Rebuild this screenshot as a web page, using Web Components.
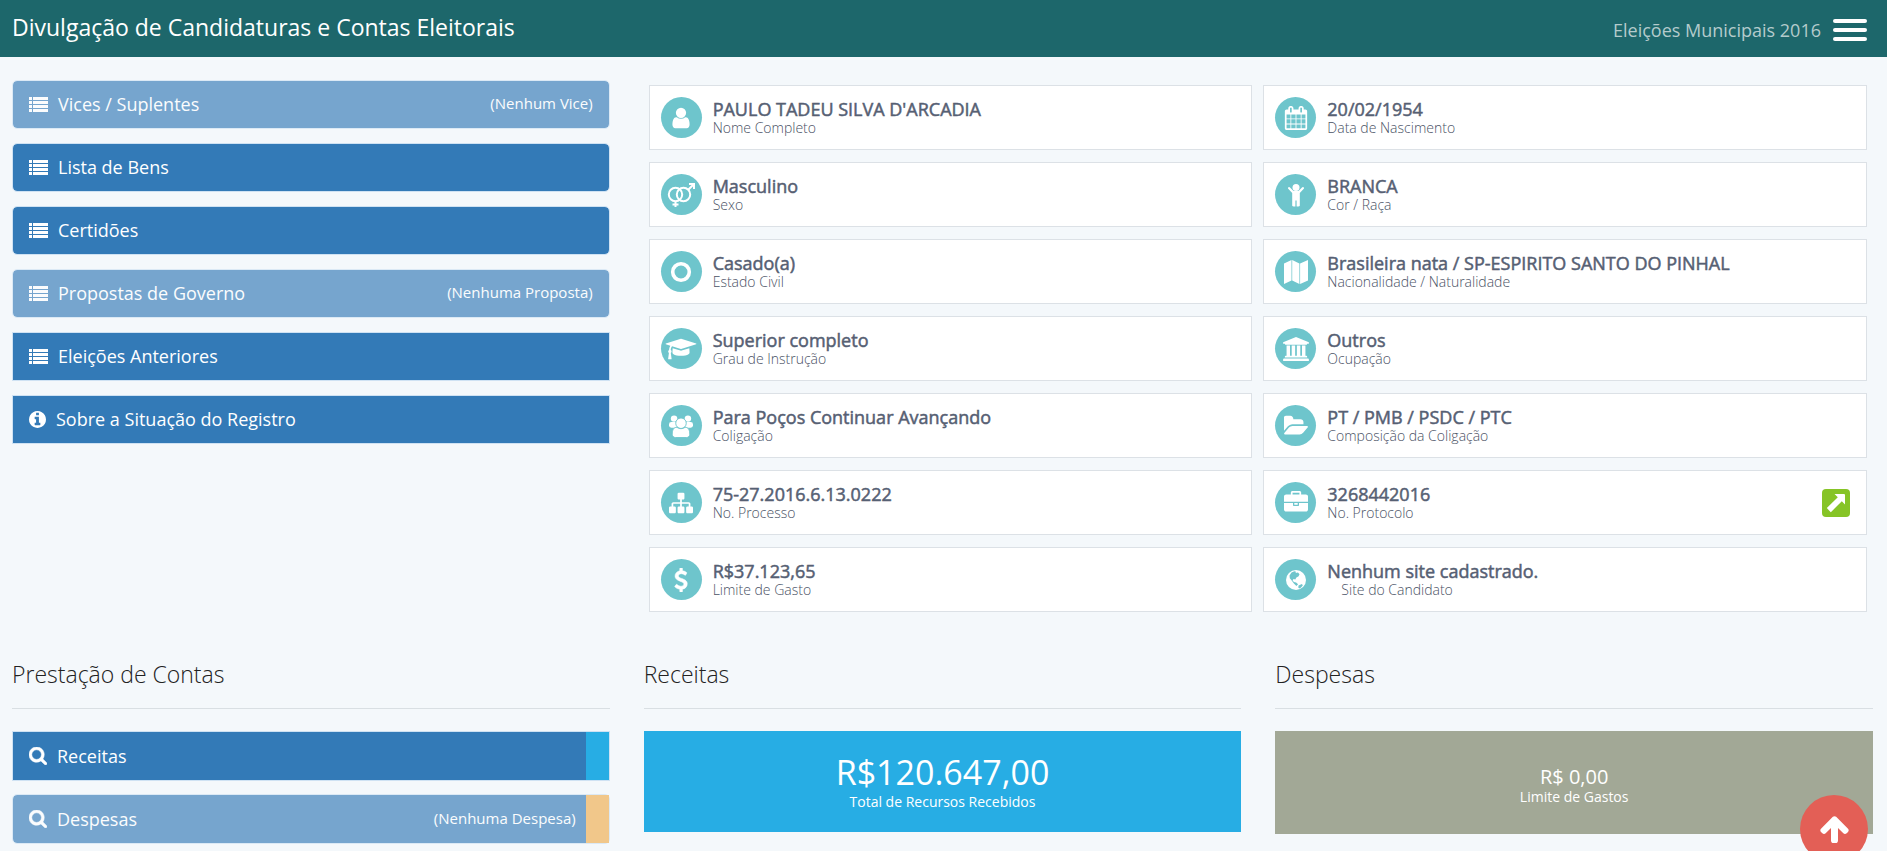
<!DOCTYPE html>
<html lang="pt-BR">
<head>
<meta charset="utf-8">
<title>Divulgação de Candidaturas e Contas Eleitorais</title>
<style>
  body {
    margin: 0;
    background: #f4f8fb;
    color: #333;
    font-family: "Open Sans", "Noto Sans", sans-serif;
  }

  main {
    display: grid;
    grid-template-columns: repeat(3, minmax(0, 1fr));
    column-gap: 34px;
    padding: 23px 14px 0 12px;
  }

  .menu {
    display: grid;
    align-content: start;
    gap: 14px;
  }

  .details {
    grid-column: span 2;
    display: grid;
    grid-template-columns: repeat(2, minmax(0, 1fr));
    gap: 12px 11px;
    padding: 5px 6px 0 5px;
  }

  .accounts {
    display: grid;
    gap: 13px;
  }
</style>
</head>
<body>

<page-header>
  Divulgação de Candidaturas e Contas Eleitorais
  <span slot="election">Eleições Municipais 2016</span>
</page-header>

<main>
  <nav class="menu">
    <menu-button icon="list" muted rounded>Vices / Suplentes<span slot="note">(Nenhum Vice)</span></menu-button>
    <menu-button icon="list" rounded>Lista de Bens</menu-button>
    <menu-button icon="list" rounded>Certidões</menu-button>
    <menu-button icon="list" muted rounded>Propostas de Governo<span slot="note">(Nenhuma Proposta)</span></menu-button>
    <menu-button icon="list">Eleições Anteriores</menu-button>
    <menu-button icon="info">Sobre a Situação do Registro</menu-button>
  </nav>

  <section class="details">
    <info-card icon="user" label="Nome Completo">PAULO TADEU SILVA D'ARCADIA</info-card>
    <info-card icon="calendar" label="Data de Nascimento">20/02/1954</info-card>
    <info-card icon="gender" label="Sexo">Masculino</info-card>
    <info-card icon="child" label="Cor / Raça">BRANCA</info-card>
    <info-card icon="ring" label="Estado Civil">Casado(a)</info-card>
    <info-card icon="map" label="Nacionalidade / Naturalidade">Brasileira nata / SP-ESPIRITO SANTO DO PINHAL</info-card>
    <info-card icon="graduation" label="Grau de Instrução">Superior completo</info-card>
    <info-card icon="bank" label="Ocupação">Outros</info-card>
    <info-card icon="group" label="Coligação">Para Poços Continuar Avançando</info-card>
    <info-card icon="folder" label="Composição da Coligação">PT / PMB / PSDC / PTC</info-card>
    <info-card icon="sitemap" label="No. Processo">75-27.2016.6.13.0222</info-card>
    <info-card icon="briefcase" label="No. Protocolo" link="#protocolo">3268442016</info-card>
    <info-card icon="dollar" label="Limite de Gasto">R$37.123,65</info-card>
    <info-card icon="globe" label="Site do Candidato" indent>Nenhum site cadastrado.</info-card>
  </section>

  <titled-section heading="Prestação de Contas">
    <div class="accounts">
      <menu-button icon="search" strip style="--strip: #27ade4">Receitas</menu-button>
      <menu-button icon="search" strip muted rounded style="--strip: #f0ad4e">Despesas<span slot="note">(Nenhuma Despesa)</span></menu-button>
    </div>
  </titled-section>

  <titled-section heading="Receitas">
    <total-box label="Total de Recursos Recebidos" large>R$120.647,00</total-box>
  </titled-section>

  <titled-section heading="Despesas">
    <total-box label="Limite de Gastos">R$ 0,00</total-box>
  </titled-section>
</main>

<scroll-top></scroll-top>

<script>
// Icon shapes: [viewBox, markup]
const ICONS = {
  list: ["0 0 19 15", `<path d="M0 0h3v3H0zM4 0h15v3H4zM0 4h3v3H0zM4 4h15v3H4zM0 8h3v3H0zM4 8h15v3H4zM0 12h3v3H0zM4 12h15v3H4z"/>`],
  info: ["128 128 1536 1536", `<path d="M1152 1376v-160q0-14-9-23t-23-9h-96v-512q0-14-9-23t-23-9h-320q-14 0-23 9t-9 23v160q0 14 9 23t23 9h96v320h-96q-14 0-23 9t-9 23v160q0 14 9 23t23 9h448q14 0 23-9t9-23zm-128-896v-160q0-14-9-23t-23-9h-192q-14 0-23 9t-9 23v160q0 14 9 23t23 9h192q14 0 23-9t9-23zm640 416q0 209-103 385.5t-279.5 279.5-385.5 103-385.5-103-279.5-279.5-103-385.5 103-385.5 279.5-279.5 385.5-103 385.5 103 279.5 279.5 103 385.5z"/>`],
  search: ["64 128 1664 1664", `<path stroke="currentColor" stroke-width="50" d="M1216 832q0-185-131.5-316.5t-316.5-131.5-316.5 131.5-131.5 316.5 131.5 316.5 316.5 131.5 316.5-131.5 131.5-316.5zm512 832q0 52-38 90t-90 38q-54 0-90-38l-343-342q-179 124-399 124-143 0-273.5-55.5t-225-150-150-225-55.5-273.5 55.5-273.5 150-225 225-150 273.5-55.5 273.5 55.5 225 150 150 225 55.5 273.5q0 220-124 399l343 343q37 37 37 90z"/>`],
  user: ["0 0 1792 1792", `<path d="M1536 1399q0 109-62.5 187t-150.5 78h-854q-88 0-150.5-78t-62.5-187q0-85 8.5-160.5t31.5-152 58.5-131 94-89 134.5-34.5q131 128 313 128t313-128q76 0 134.5 34.5t94 89 58.5 131 31.5 152 8.5 160.5zm-256-887q0 159-112.5 271.5t-271.5 112.5-271.5-112.5-112.5-271.5 112.5-271.5 271.5-112.5 271.5 112.5 112.5 271.5z"/>`],
  calendar: ["0 0 1792 1792", `<path d="M192 1664h288v-288h-288v288zm352 0h320v-288h-320v288zm-352-352h288v-320h-288v320zm352 0h320v-320h-320v320zm-352-384h288v-288h-288v288zm736 736h320v-288h-320v288zm-384-736h320v-288h-320v288zm768 736h288v-288h-288v288zm-384-352h320v-320h-320v320zm-352-864v-288q0-13-9.5-22.5t-22.5-9.5h-64q-13 0-22.5 9.5t-9.5 22.5v288q0 13 9.5 22.5t22.5 9.5h64q13 0 22.5-9.5t9.5-22.5zm736 864h288v-320h-288v320zm-384-384h320v-288h-320v288zm384 0h288v-288h-288v288zm32-480v-288q0-13-9.5-22.5t-22.5-9.5h-64q-13 0-22.5 9.5t-9.5 22.5v288q0 13 9.5 22.5t22.5 9.5h64q13 0 22.5-9.5t9.5-22.5zm384-64v1280q0 52-38 90t-90 38h-1408q-52 0-90-38t-38-90v-1280q0-52 38-90t90-38h128v-96q0-66 47-113t113-47h64q66 0 113 47t47 113v96h384v-96q0-66 47-113t113-47h64q66 0 113 47t47 113v96h128q52 0 90 38t38 90z"/>`],
  gender: ["0 0 28 24", `<g fill="none" stroke="currentColor" stroke-width="2"><circle cx="8.5" cy="11.5" r="6.7"/><circle cx="16.5" cy="11.5" r="6.7"/><path d="M8.5 18v6M5.500 21.500h6M21.500 6.500l5.500-5.500M22 1h5v5"/></g>`],
  child: ["0 0 24 24", `<circle cx="12" cy="4.500" r="3.500"/><path d="M4.500 4.200Q3.700 4.700 4 5.600L8.200 10v12.700q.3.800 1.500.8h1.700v-6h1.200v6h1.700q1.200 0 1.500-.8V10L20 5.600q.3-.9-.5-1.400-.8-.4-1.500.2L14.500 8h-5L6 4.400q-.7-.6-1.500-.2z"/>`],
  ring: ["0 0 24 24", `<circle cx="12" cy="12" r="8.300" fill="none" stroke="currentColor" stroke-width="3.600"/>`],
  map: ["0 0 24 24", `<path d="M0 3.500L7.500 0v20.500L0 24zM8.200 0l7.200 3.500V24l-7.200-3.500zM16.100 3.500L24 0v20.500L16.100 24z"/>`],
  graduation: ["0 0 2304 1792", `<path d="M1774 836l18 316q4 69-82 128t-235 93.500-323 34.500-323-34.500-235-93.500-82-128l18-316 574 181q22 7 48 7t48-7zm530-324q0 23-22 31l-1120 352q-4 1-10 1t-10-1l-652-206q-43 34-71 111.500t-34 178.500q63 36 63 109 0 69-58 107l58 433q2 14-8 25-9 11-24 11h-192q-15 0-24-11-10-11-8-25l58-433q-58-38-58-107 0-73 65-111 11-207 98-330l-333-104q-22-8-22-31t22-31l1120-352q4-1 10-1t10 1l1120 352q22 8 22 31z"/>`],
  bank: ["0 0 1920 1792", `<path d="M960 0l960 384v128h-128q0 26-20.500 45t-48.500 19h-1526q-28 0-48.500-19t-20.500-45h-128v-128zm-704 640h256v768h128v-768h256v768h128v-768h256v768h128v-768h256v768h59q28 0 48.500 19t20.500 45v64h-1664v-64q0-26 20.500-45t48.500-19h59v-768zm1595 960q28 0 48.500 19t20.500 45v128h-1920v-128q0-26 20.500-45t48.500-19h1782z"/>`],
  group: ["0 0 26 24", `<circle cx="5.500" cy="4" r="3.500"/><circle cx="20.500" cy="4" r="3.500"/><rect y="7.800" width="9" height="6" rx="2.500"/><rect x="17" y="7.800" width="9" height="6" rx="2.500"/><g stroke="#6ec5cc"><circle cx="13" cy="9" r="5.700"/><path d="M3.500 21c0-4 1.200-7.600 5-7.600 2.600 2 6.400 2 9 0 3.800 0 5 3.600 5 7.600 0 2-1.500 3.500-3.500 3.500H7c-2 0-3.500-1.500-3.500-3.500z"/></g>`],
  folder: ["0 0 1816 1792", `<path d="M1815 952q0 31-31 66l-336 396q-43 51-120.500 86.500t-143.500 35.500h-1088q-34 0-60.500-13t-26.500-43q0-31 31-66l336-396q43-51 120.500-86.500t143.500-35.500h1088q34 0 60.500 13t26.500 43zm-343-344v160h-832q-94 0-197 47.500t-164 119.500l-337 396-5 6q0-4-.5-12.500t-.5-12.500v-960q0-92 66-158t158-66h320q92 0 158 66t66 158v32h544q92 0 158 66t66 158z"/>`],
  sitemap: ["0 0 1792 1792", `<path d="M1792 1248v320q0 40-28 68t-68 28h-320q-40 0-68-28t-28-68v-320q0-40 28-68t68-28h96v-192h-512v192h96q40 0 68 28t28 68v320q0 40-28 68t-68 28h-320q-40 0-68-28t-28-68v-320q0-40 28-68t68-28h96v-192h-512v192h96q40 0 68 28t28 68v320q0 40-28 68t-68 28h-320q-40 0-68-28t-28-68v-320q0-40 28-68t68-28h96v-192q0-52 38-90t90-38h512v-192h-96q-40 0-68-28t-28-68v-320q0-40 28-68t68-28h320q40 0 68 28t28 68v320q0 40-28 68t-68 28h-96v192h512q52 0 90 38t38 90v192h96q40 0 68 28t28 68z"/>`],
  briefcase: ["0 0 1792 1792", `<path d="M640 256h512v-128h-512v128zm1152 640v480q0 66-47 113t-113 47h-1472q-66 0-113-47t-47-113v-480h672v160q0 26 19 45t45 19h320q26 0 45-19t19-45v-160h672zm-768 0v128h-256v-128h256zm768-480v384h-1792v-384q0-66 47-113t113-47h352v-160q0-40 28-68t68-28h576q40 0 68 28t28 68v160h352q66 0 113 47t47 113z"/>`],
  dollar: ["0 0 1792 1792", `<path stroke="currentColor" stroke-width="40" d="M1362 1185q0 153-99.500 263.500t-258.500 136.500v175q0 14-9 23t-23 9h-135q-13 0-22.500-9.500t-9.500-22.500v-175q-66-9-127.500-31t-101.500-44.500-74-48-46.500-37.500-17.500-18q-17-21-2-41l103-135q7-10 23-12 15-2 24 9l2 2q113 99 243 125 37 8 74 8 81 0 142.500-43t61.500-122q0-28-15-53t-33.500-42-58.500-37.500-66-32-80-32.500q-39-16-61.500-25t-61.500-26.500-62.500-31-56.500-35.500-53.500-42.500-43.500-49-35.500-58-21-66.500-8.500-78q0-138 98-242t255-134v-180q0-13 9.500-22.500t22.500-9.500h135q14 0 23 9t9 23v176q57 6 110.500 23t87 33.500 63.500 37.500 39 29 15 14q17 18 5 38l-81 146q-8 15-23 16-14 3-27-7-3-3-14.500-12t-39-26.500-58.500-32-74.500-26-85.500-11.500q-95 0-155 43t-60 111q0 26 8.500 48t29.500 41.500 39.500 33 56 31 60.500 27 70 27.500q53 20 81 31.500t76 35 75.500 42.500 62 50 53 63.500 31.500 76.500 13 94z"/>`],
  globe: ["0 0 24 24", `<circle cx="12" cy="12" r="10"/><path fill="#6ec5cc" d="M7.500 4.500l2.800-1.300 1.700.6-.4 1.300 2.400-.5 1.500 1.700-.9 2-2.200 1.200-1.100 2-1.700-.4-1.100 1.100 1.400 1.800 2.200.6 2 1.700-1.700 1.600-2.500-2.400-2.600-3.600-1.500-1.700-.3-2.600zM14.500 17.500l3.500-1.500.8 1.500-2.800 3-1.700-.8z"/>`],
  up: ["100 128 1592 1592", `<path d="M1675 971q0 51-37 90l-75 75q-38 38-91 38-54 0-90-38l-294-293v704q0 52-37.500 84.500t-90.500 32.500h-128q-53 0-90.500-32.500t-37.500-84.500v-704l-294 293q-36 38-90 38t-90-38l-75-75q-38-38-38-90 0-53 38-91l651-651q35-37 90-37 54 0 91 37l651 651q37 39 37 91z"/>`],
  external: ["0 0 28 28", `<rect width="28" height="28" rx="4" fill="#86c426"/><path fill="#fff" d="M12.500 5H22q1 0 1 1v9.500l-3.200-3.200L8.800 23.200 4.800 19 15.800 8.300z"/>`]
};

const icon = name => `<svg viewBox="${ICONS[name][0]}" fill="currentColor" aria-hidden="true">${ICONS[name][1]}</svg>`;

// Base class: renders the template of the subclass once
class BaseElement extends HTMLElement {
  constructor() {
    super();
    this.attachShadow({ mode: "open" });
  }

  connectedCallback() {
    const t = document.createElement("template");
    t.innerHTML = this.template;
    this.shadowRoot.replaceChildren(t.content.cloneNode(true));
  }
}

class PageHeader extends BaseElement {
  get template() {
    return `
    <style>
      :host { display: block; }
      header {
        display: flex;
        align-items: center;
        justify-content: space-between;
        height: 57px;
        padding: 0 20px 0 12px;
        background: #1d676b;
        color: #fff;
      }
      h1 {
        margin: 0;
        padding-bottom: 4px;
        font-size: 23px;
        line-height: 32px;
        font-weight: 400;
      }
      .right {
        display: flex;
        align-items: center;
        gap: 12px;
        padding-top: 2px;
        font-size: 18px;
        line-height: 24px;
        color: #b4cbcc;
      }
      button {
        display: grid;
        gap: 5px;
        width: 34px;
        padding: 0;
        border: 0;
        background: none;
      }
      i {
        height: 4px;
        border-radius: 2px;
        background: #fff;
      }
    </style>
    <header>
      <h1><slot></slot></h1>
      <div class="right">
        <slot name="election"></slot>
        <button type="button" aria-label="Menu"><i></i><i></i><i></i></button>
      </div>
    </header>`;
  }
}

class MenuButton extends BaseElement {
  get template() {
    return `
    <style>
      :host { display: block; }
      button {
        display: flex;
        align-items: center;
        box-sizing: border-box;
        width: 100%;
        height: 49px;
        padding: 0 16px 1px;
        border: 1px solid #cfe2f3;
        background: #337ab7;
        background-clip: padding-box;
        color: #fff;
        font: inherit;
        font-size: 18px;
        line-height: 24px;
        text-align: left;
      }
      :host([rounded]) button { border-radius: 5px; }
      :host([muted]) button { opacity: .65; }
      :host([strip]) button {
        height: 50px;
        padding: 0 0 0 16px;
      }
      :host([strip]) button::after {
        content: "";
        align-self: stretch;
        width: 23px;
        margin-left: 10px;
        background: var(--strip);
      }
      svg { width: 19px; height: 15px; margin-right: 10px; }
      :host([icon="info"]) svg { width: 17px; height: 17px; }
      :host([icon="search"]) svg { width: 18px; height: 18px; }
      .label { flex: 1; }
      .note {
        padding-bottom: 3px;
        font-size: 15px;
        line-height: 20px;
      }
    </style>
    <button type="button">
      ${icon(this.getAttribute("icon"))}
      <span class="label"><slot></slot></span>
      <span class="note"><slot name="note"></slot></span>
    </button>`;
  }
}

class InfoCard extends BaseElement {
  get template() {
    const link = this.getAttribute("link");
    return `
    <style>
      :host {
        display: flex;
        align-items: center;
        gap: 11px;
        box-sizing: border-box;
        height: 65px;
        padding: 0 16px 0 11px;
        border: 1px solid #dce1e6;
        background: #fff;
        color: #566073;
      }
      .circle {
        display: grid;
        place-items: center;
        width: 41px;
        height: 41px;
        border-radius: 50%;
        background: #6ec5cc;
        color: #fff;
      }
      .circle svg { width: 24px; height: 24px; }
      :host([icon="graduation"]) .circle svg { width: 34px; }
      :host([icon="bank"]) .circle svg { width: 26px; }
      :host([icon="gender"]) .circle svg { width: 28px; }
      .text { flex: 1; }
      .value {
        font-size: 18px;
        line-height: 20px;
        -webkit-text-stroke: 0.5px currentColor;
      }
      .label {
        font-size: 14px;
        line-height: 18px;
        font-weight: 300;
        color: #4a5265;
      }
      :host([indent]) .label { padding-left: 14px; }
      a { display: block; height: 28px; }
      a svg { width: 28px; height: 28px; }
    </style>
    <span class="circle">${icon(this.getAttribute("icon"))}</span>
    <div class="text">
      <div class="value"><slot></slot></div>
      <div class="label">${this.getAttribute("label")}</div>
    </div>
    ${link ? `<a href="${link}" aria-label="Abrir protocolo">${icon("external")}</a>` : ""}`;
  }
}

class TitledSection extends BaseElement {
  get template() {
    return `
    <style>
      :host { display: block; padding-top: 45px; }
      h2 {
        margin: 0 0 22px;
        padding-bottom: 17px;
        border-bottom: 1px solid #d9dfe3;
        font-size: 23px;
        line-height: 34px;
        font-weight: 300;
        color: #222;
      }
    </style>
    <h2>${this.getAttribute("heading")}</h2>
    <slot></slot>`;
  }
}

class TotalBox extends BaseElement {
  get template() {
    return `
    <style>
      :host {
        display: block;
        padding: 35px 0 28px;
        background: #a2a896;
        color: #fff;
        text-align: center;
      }
      .value { font-size: 20px; line-height: 22px; }
      .label { font-size: 14px; line-height: 18px; }
      :host([large]) { padding: 21px 0; background: #27ade4; }
      :host([large]) .value { font-size: 34px; line-height: 41px; }
    </style>
    <div class="value"><slot></slot></div>
    <div class="label">${this.getAttribute("label")}</div>`;
  }
}

class ScrollTop extends BaseElement {
  get template() {
    return `
    <style>
      /* Floats over the page, partly below the fold */
      :host {
        position: fixed;
        right: 19px;
        bottom: -12px;
      }
      button {
        display: grid;
        place-items: center;
        width: 68px;
        height: 68px;
        padding: 0;
        border: 0;
        border-radius: 50%;
        background: #e35f56;
        color: #fff;
      }
      svg { width: 29px; height: 29px; }
    </style>
    <button type="button" aria-label="Voltar ao topo">${icon("up")}</button>`;
  }
}

// Register the elements
customElements.define("page-header", PageHeader);
customElements.define("menu-button", MenuButton);
customElements.define("info-card", InfoCard);
customElements.define("titled-section", TitledSection);
customElements.define("total-box", TotalBox);
customElements.define("scroll-top", ScrollTop);
</script>
</body>
</html>
